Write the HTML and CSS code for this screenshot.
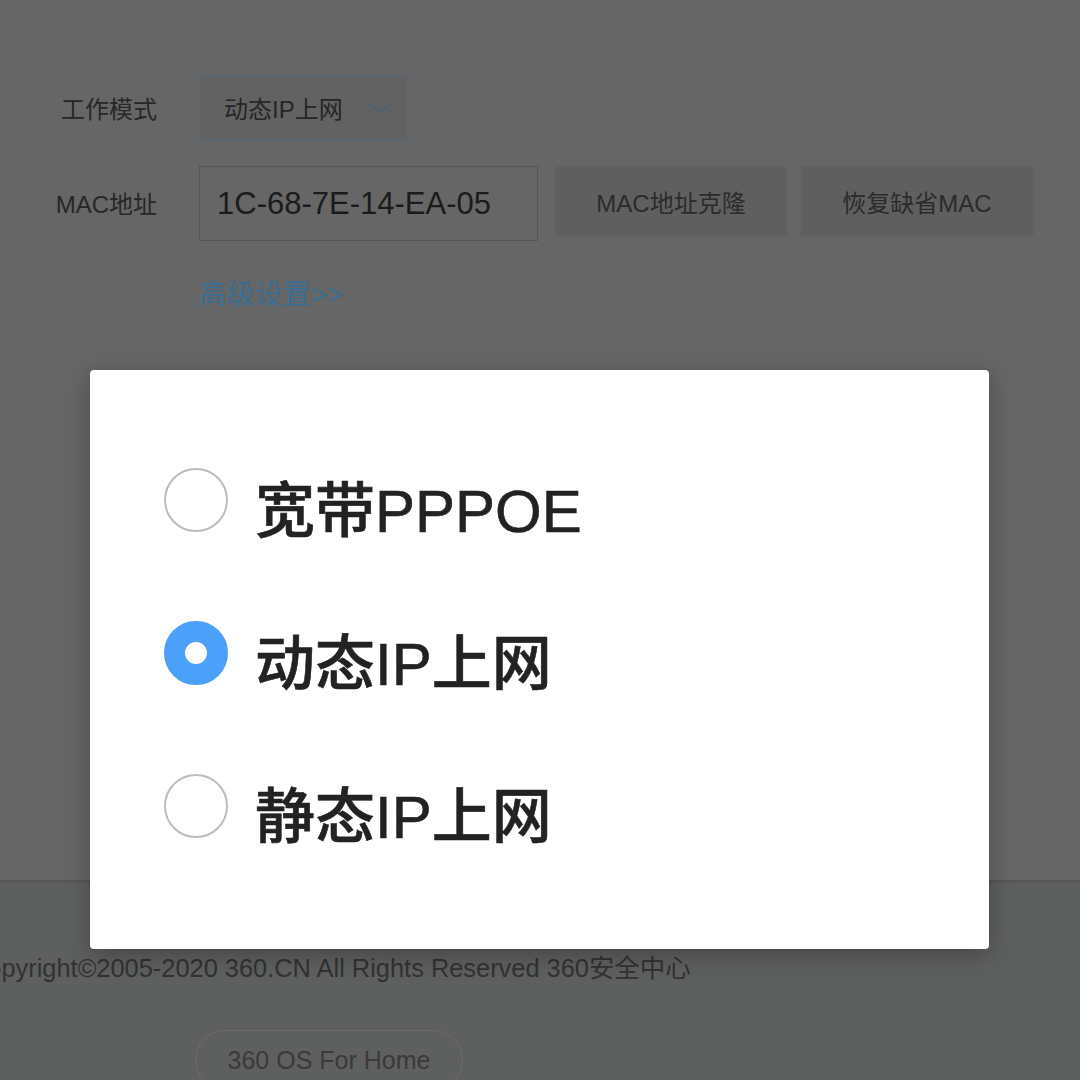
FILE: index.html
```html
<!DOCTYPE html>
<html lang="zh-CN">
<head>
<meta charset="utf-8">
<title>工作模式</title>
<link rel="stylesheet" href="styles.css">
</head>
<body>
<div class="page">
  <section class="form">
    <div class="row row-mode">
      <span class="lbl">工作模式</span>
      <div class="select">
        <span class="select-text">动态IP上网</span>
        <svg class="chev" width="24" height="14" viewBox="0 0 24 14"><path d="M1 1.5 L12 12 L23 1.5" fill="none" stroke="#4b6375" stroke-width="1.8"/></svg>
      </div>
    </div>
    <div class="row row-mac">
      <span class="lbl lbl-mac">MAC地址</span>
      <div class="input">1C-68-7E-14-EA-05</div>
      <button class="btn btn-clone">MAC地址克隆</button>
      <button class="btn btn-reset">恢复缺省MAC</button>
    </div>
    <div class="row row-link">
      <span class="lbl"></span>
      <a class="adv">高级设置&gt;&gt;</a>
    </div>
  </section>
  <footer class="footer">
    <p class="copy">Copyright©2005-2020 360.CN All Rights Reserved 360安全中心</p>
    <div class="pill-row"><span class="pill">360 OS For Home</span></div>
  </footer>
</div>

<div class="dialog">
  <div class="opt">
    <span class="radio"></span>
    <span class="opt-text">宽带PPPOE</span>
  </div>
  <div class="opt">
    <span class="radio checked"></span>
    <span class="opt-text">动态IP上网</span>
  </div>
  <div class="opt">
    <span class="radio"></span>
    <span class="opt-text">静态IP上网</span>
  </div>
</div>
</body>
</html>
```

FILE: styles.css
```css
* { box-sizing: border-box; }
html, body {
  margin: 0;
  padding: 0;
  width: 1080px;
  height: 1080px;
  overflow: hidden;
  background: #666666;
  font-family: "Liberation Sans", "Noto Sans CJK SC", sans-serif;
}
.page {
  width: 1080px;
  height: 1080px;
  display: flex;
  flex-direction: column;
}
.form {
  height: 880px;
  padding-top: 76px;
  display: flex;
  flex-direction: column;
}
.row {
  display: flex;
  align-items: center;
  gap: 42px;
}
.lbl {
  width: 157px;
  text-align: right;
  font-size: 24px;
  color: #272727;
  flex: none;
}
.row-mode .lbl { margin-top: -3px; }
.select {
  width: 208px;
  height: 65px;
  border: 1.5px solid #52687a;
  background: #626262;
  display: flex;
  align-items: center;
  padding-left: 24px;
  padding-right: 14px;
  padding-bottom: 3px;
  justify-content: space-between;
}
.select-text {
  font-size: 24px;
  color: #262626;
}
.chev { margin-top: 2px; }
.row-mac {
  margin-top: 25px;
  align-items: flex-start;
}
.lbl-mac {
  align-self: center;
  margin-top: -2px;
}
.input {
  width: 339px;
  height: 75px;
  border: 1.5px solid #565656;
  background: #666666;
  display: flex;
  align-items: center;
  padding-left: 17px;
  font-size: 31px;
  color: #1b1b1b;
}
.btn {
  font-family: inherit;
  height: 68px;
  margin-top: 1px;
  border: none;
  background: #5f5f5f;
  color: #2b2b2b;
  font-size: 24px;
  border-radius: 2px;
  box-shadow: 0 0 0 2px #636363;
  padding: 0;
  width: 230px;
}
.btn-clone { margin-left: -24px; }
.btn-reset { margin-left: -27px; width: 232px; }
.row-link { margin-top: 37px; }
.adv {
  font-size: 28px;
  color: #3b6d92;
  line-height: 34px;
}
.footer {
  flex: 1;
  background: #5e605f;
  border-top: 3px solid #575857;
  padding-top: 70px;
  overflow: hidden;
}
.copy {
  margin: 0 0 0 -31px;
  font-size: 25.4px;
  line-height: 30px;
  color: #323232;
  white-space: nowrap;
}
.pill-row {
  margin-top: 47px;
  padding-left: 195px;
}
.pill {
  display: inline-flex;
  align-items: center;
  justify-content: center;
  width: 268px;
  height: 60px;
  border: 1px solid #6c6c6c;
  border-radius: 30px;
  font-size: 25px;
  color: #3a3a3a;
}
.dialog {
  position: absolute;
  left: 90px;
  top: 370px;
  width: 899px;
  height: 579px;
  background: #ffffff;
  border-radius: 4px;
  box-shadow: 0 6px 24px rgba(0,0,0,0.28);
  padding-top: 53px;
  padding-left: 74px;
}
.opt {
  height: 153px;
  display: flex;
  align-items: center;
  gap: 27px;
}
.radio {
  width: 64px;
  height: 64px;
  border-radius: 50%;
  border: 2.5px solid #bdbdbd;
  flex: none;
}
.radio.checked {
  border: 21px solid #4ba0fa;
  background: #ffffff;
}
.opt-text {
  font-size: 60px;
  font-weight: 500;
  color: #222222;
  padding-top: 24px;
  line-height: 64px;
  -webkit-text-stroke: 0.6px #222222;
}
```
